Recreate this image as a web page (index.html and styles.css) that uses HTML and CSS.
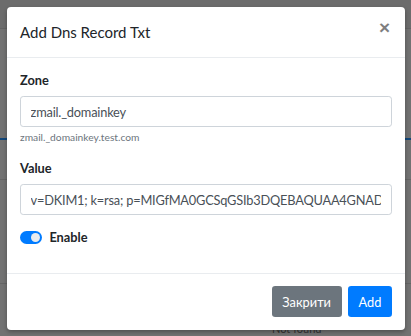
FILE: index.html
```html
<!DOCTYPE html>
<html lang="en">
<head>
    <meta charset="UTF-8">
    <meta name="viewport" content="width=device-width, initial-scale=1.0">
    <title>Add Dns Record Txt</title>
    <link rel="stylesheet" href="styles.css">
</head>
<body>
    <div class="page">
        <div class="page-nav"></div>
        <div class="page-tabs"></div>
        <div class="page-row"></div>
        <div class="page-row last"></div>
        <div class="page-note">Not found</div>
    </div>

    <div class="backdrop"></div>

    <div class="modal">
        <div class="modal-content">
            <div class="modal-header">
                <h5 class="modal-title">Add Dns Record Txt</h5>
                <button class="close" type="button">&times;</button>
            </div>
            <div class="modal-body">
                <div class="form-group">
                    <label for="zone">Zone</label>
                    <input class="form-control" id="zone" type="text" value="zmail._domainkey">
                    <small class="form-text">zmail._domainkey.test.com</small>
                </div>
                <div class="form-group">
                    <label for="value">Value</label>
                    <input class="form-control" id="value" type="text" value="v=DKIM1; k=rsa; p=MIGfMA0GCSqGSIb3DQEBAQUAA4GNADCBiQKBgQC">
                </div>
                <div class="form-group">
                    <div class="switch">
                        <span class="switch-track"><span class="switch-knob"></span></span>
                        <span class="switch-label">Enable</span>
                    </div>
                </div>
            </div>
            <div class="modal-footer">
                <button class="btn btn-secondary" type="button">Закрити</button>
                <button class="btn btn-primary" type="button">Add</button>
            </div>
        </div>
    </div>
</body>
</html>
```
FILE: styles.css
```css
* {
    box-sizing: border-box;
}

body {
    margin: 0;
    width: 411px;
    height: 336px;
    overflow: hidden;
    position: relative;
    font-family: 'Lato', 'Liberation Sans', sans-serif;
    font-size: 12.8px;
    line-height: 1.5;
    color: #212529;
    background-color: #727272;
}

.page {
    height: 336px;
}

.page-nav {
    height: 29px;
    border-bottom: 1px solid #636363;
    background-color: #6c6c6c;
}

.page-tabs {
    height: 111px;
    border-bottom: 2px solid #12477a;
}

.page-row {
    height: 40px;
    border-bottom: 1px solid #656565;
}

.page-row.last {
    height: 104px;
}

.page-note {
    padding: 39px 0 0 272px;
    color: #333;
    font-size: 11px;
    line-height: 12px;
}

.backdrop {
    position: absolute;
    inset: 0;
}

.modal {
    position: absolute;
    top: 7px;
    left: 7px;
    width: 398px;
}

.modal-content {
    background-color: #fff;
    border-radius: 4px;
    box-shadow: 0 2px 4px rgba(0, 0, 0, .3);
}

.modal-header {
    display: flex;
    align-items: flex-start;
    justify-content: space-between;
    padding: 12.8px 13px;
    border-bottom: 1px solid #e9ecef;
}

.modal-title {
    margin: 0;
    font-size: 15px;
    font-weight: 400;
    line-height: 24px;
}

.close {
    border: none;
    background: none;
    padding: 0;
    margin: -2px 2px 0 0;
    font-family: 'Liberation Sans', sans-serif;
    font-size: 19px;
    font-weight: 700;
    line-height: 1;
    color: #000;
    opacity: .5;
}

.modal-body {
    padding: 13px;
}

.form-group {
    margin-bottom: 12.8px;
}

label {
    display: block;
    margin-bottom: 6.4px;
    font-weight: 700;
}

.form-control {
    display: block;
    width: 100%;
    height: 31px;
    padding: 4.8px 9.6px;
    font-family: inherit;
    font-size: 12.8px;
    letter-spacing: -.2px;
    color: #495057;
    border: 1px solid #ced4da;
    border-radius: 3.2px;
}

.form-text {
    display: block;
    margin-top: 3.2px;
    font-size: 10.24px;
    color: #6c757d;
}

.switch {
    display: flex;
    align-items: center;
    gap: 7px;
    height: 19px;
}

.switch-track {
    position: relative;
    width: 22.4px;
    height: 12.8px;
    border-radius: 7px;
    background-color: #007bff;
}

.switch-knob {
    position: absolute;
    top: 2px;
    right: 2px;
    width: 9px;
    height: 9px;
    border-radius: 50%;
    background-color: #e9ecef;
}

.switch-label {
    font-weight: 700;
}

.modal-footer {
    display: flex;
    justify-content: flex-end;
    gap: 6.4px;
    padding: 12.8px 13px;
    border-top: 1px solid #e9ecef;
}

.btn {
    height: 31px;
    padding: 4.8px 9.6px;
    border: 1px solid transparent;
    border-radius: 3.2px;
    font-family: inherit;
    font-size: 12.8px;
    color: #fff;
}

.btn-secondary {
    background-color: #6c757d;
}

.btn-primary {
    background-color: #007bff;
}
```
